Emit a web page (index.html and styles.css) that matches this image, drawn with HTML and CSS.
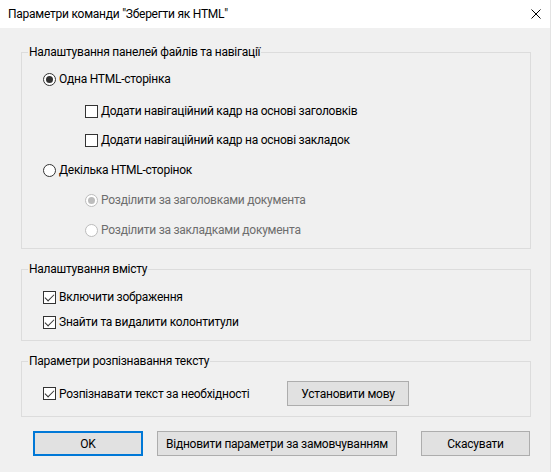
FILE: index.html
```html
<!DOCTYPE html>
<html lang="uk">
<head>
  <meta charset="UTF-8" />
  <meta name="viewport" content="width=device-width, initial-scale=1.0"/>
  <title>Параметри команди "Зберегти як HTML"</title>
  <link rel="stylesheet" href="styles.css">
</head>
<body>

  <div class="window">
    <div class="titlebar">
      <span class="title">Параметри команди "Зберегти як HTML"</span>
      <span class="close">
        <svg width="10" height="10" viewBox="0 0 10 10">
          <path d="M0.5 0.5 L9.5 9.5 M9.5 0.5 L0.5 9.5" stroke="#000" stroke-width="1" fill="none"/>
        </svg>
      </span>
    </div>

    <div class="content">
      <!-- File and navigation panels -->
      <fieldset class="group">
        <legend>Налаштування панелей файлів та навігації</legend>
        <div class="group-body nav-body">
          <div class="option row-1"><span class="radio checked"></span>Одна HTML-сторінка</div>
          <div class="option indent row-2"><span class="check"></span>Додати навігаційний кадр на основі заголовків</div>
          <div class="option indent row-3"><span class="check"></span>Додати навігаційний кадр на основі закладок</div>
          <div class="option row-4"><span class="radio"></span>Декілька HTML-сторінок</div>
          <div class="option indent disabled row-5"><span class="radio checked"></span>Розділити за заголовками документа</div>
          <div class="option indent disabled row-6"><span class="radio"></span>Розділити за закладками документа</div>
        </div>
      </fieldset>

      <!-- Content -->
      <fieldset class="group">
        <legend>Налаштування вмісту</legend>
        <div class="group-body content-body">
          <div class="option row-a"><span class="check checked"></span>Включити зображення</div>
          <div class="option row-b"><span class="check checked"></span>Знайти та видалити колонтитули</div>
        </div>
      </fieldset>

      <!-- OCR -->
      <fieldset class="group">
        <legend>Параметри розпізнавання тексту</legend>
        <div class="group-body ocr-body">
          <div class="option ocr-row">
            <span class="check checked"></span>
            <span class="ocr-label">Розпізнавати текст за необхідності</span>
            <button class="btn lang-btn">Установити мову</button>
          </div>
        </div>
      </fieldset>

      <div class="buttons">
        <button class="btn btn-ok">OK</button>
        <button class="btn btn-reset">Відновити параметри за замовчуванням</button>
        <button class="btn btn-cancel">Скасувати</button>
      </div>
    </div>
  </div>

</body>
</html>
```

FILE: styles.css
```css
* {
  margin: 0;
  padding: 0;
  box-sizing: border-box;
}

body {
  background: #f0f0f0;
  font-family: "Segoe UI", Roboto, "Noto Sans", sans-serif;
  font-size: 12px;
  letter-spacing: -0.25px;
  color: #000;
  width: 551px;
  height: 472px;
  overflow: hidden;
}

.window {
  width: 551px;
  height: 472px;
  border-right: 1px solid #e3e3e3;
}

.titlebar {
  height: 28px;
  background: #fff;
  display: flex;
  align-items: center;
  justify-content: space-between;
  padding: 0 9px 0 8px;
}

.close {
  display: flex;
  width: 10px;
  height: 10px;
}

.content {
  padding: 16px 0 0 21px;
}

.group {
  width: 510px;
  border: 1px solid #dcdcdc;
  margin-top: 12px;
}

.group:first-child {
  margin-top: 0;
}

legend {
  margin-left: 6px;
  padding: 0 1px;
  line-height: 16px;
}

.group-body {
  padding: 0 0 10px 21px;
}

.option {
  display: flex;
  align-items: center;
  height: 16px;
  line-height: 16px;
  white-space: nowrap;
}

.option.indent {
  margin-left: 42px;
}

.option.disabled {
  color: #6d6d6d;
}

.row-1 { margin-top: 11px; }
.row-2 { margin-top: 16px; }
.row-3 { margin-top: 13px; }
.row-4 { margin-top: 14px; }
.row-5 { margin-top: 14px; }
.row-6 { margin-top: 14px; }

.row-a { margin-top: 12px; }
.row-b { margin-top: 9px; }

.ocr-row {
  height: 25px;
  margin-top: 12px;
}

.ocr-label {
  width: 228px;
}

.radio, .check {
  width: 13px;
  height: 13px;
  margin-right: 3px;
  flex-shrink: 0;
  border: 1px solid #333;
  background: #fff;
  position: relative;
}

.radio {
  border-radius: 50%;
}

.radio.checked::after {
  content: "";
  position: absolute;
  left: 2px;
  top: 2px;
  width: 7px;
  height: 7px;
  border-radius: 50%;
  background: #333;
}

.disabled .radio {
  border-color: #bcbcbc;
}

.disabled .radio.checked::after {
  background: #bcbcbc;
}

.check.checked::after {
  content: "";
  position: absolute;
  left: 3px;
  top: 0px;
  width: 4px;
  height: 8px;
  border: solid #333;
  border-width: 0 1px 1px 0;
  transform: rotate(45deg);
}

.btn {
  font-family: inherit;
  font-size: 12px;
  letter-spacing: inherit;
  color: #000;
  height: 25px;
  background: #e1e1e1;
  border: 1px solid #adadad;
}

.lang-btn {
  width: 122px;
}

.buttons {
  display: flex;
  margin-top: 14px;
  padding-left: 12px;
}

.btn-ok {
  width: 110px;
  border: 2px solid #0078d7;
}

.btn-reset {
  width: 240px;
  margin-left: 14px;
}

.btn-cancel {
  width: 109px;
  margin-left: 24px;
}
```
